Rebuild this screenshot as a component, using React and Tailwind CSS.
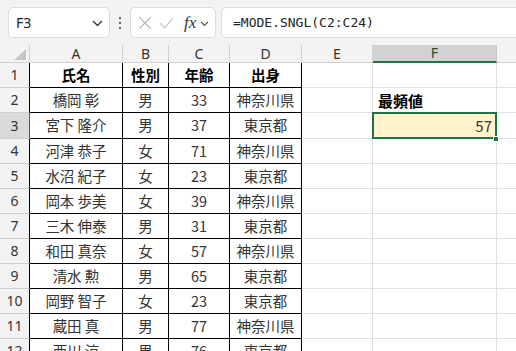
import React from "react";

const rows = [
  ["氏名", "性別", "年齢", "出身"],
  ["橋岡 彰", "男", "33", "神奈川県"],
  ["宮下 隆介", "男", "37", "東京都"],
  ["河津 恭子", "女", "71", "神奈川県"],
  ["水沼 紀子", "女", "23", "東京都"],
  ["岡本 歩美", "女", "39", "神奈川県"],
  ["三木 伸泰", "男", "31", "東京都"],
  ["和田 真奈", "女", "57", "神奈川県"],
  ["清水 勲", "男", "65", "東京都"],
  ["岡野 智子", "女", "23", "東京都"],
  ["蔵田 真", "男", "77", "神奈川県"],
  ["西川 涼", "男", "76", "東京都"],
];

const jp = { fontFamily: '"Noto Sans CJK JP", "Noto Sans", sans-serif' };
const ui = { fontFamily: '"Noto Sans", "Open Sans", sans-serif' };

function TopBar() {
  return (
    <div className="flex h-[45px] bg-[#f3f3f3] overflow-hidden">
      <div className="ml-[8px] mt-[7px] h-[31px] w-[102px] shrink-0 rounded-[5px] border border-[#dcdcdc] bg-white flex items-center pl-[7px] pr-[6px]">
        <span className="text-[14px] text-[#222] flex-1" style={ui}>F3</span>
        <svg width="11" height="7" viewBox="0 0 11 7" className="mt-[1px]">
          <path d="M1 1 L5.5 5.5 L10 1" fill="none" stroke="#333" strokeWidth="1.3" />
        </svg>
      </div>
      <div className="w-[20px] shrink-0 flex flex-col items-center justify-center gap-[3px] mt-[1px]">
        <div className="w-[2px] h-[2px] bg-[#333] rounded-full" />
        <div className="w-[2px] h-[2px] bg-[#333] rounded-full" />
        <div className="w-[2px] h-[2px] bg-[#333] rounded-full" />
      </div>
      <div className="mt-[7px] h-[31px] w-[86px] shrink-0 rounded-[5px] border border-[#dcdcdc] bg-white flex items-center pl-[6px]">
        <svg width="14" height="14" viewBox="0 0 14 14" className="ml-[1px]">
          <path d="M1 1 L13 13 M13 1 L1 13" stroke="#b8b8b8" strokeWidth="1.1" fill="none" />
        </svg>
        <svg width="15" height="12" viewBox="0 0 15 12" className="ml-[7px]">
          <path d="M1 6 L5.5 11 L14 1" stroke="#b8b8b8" strokeWidth="1.1" fill="none" />
        </svg>
        <span className="ml-[10px] text-[17px] italic text-[#333] leading-none" style={{ fontFamily: '"Liberation Serif", serif' }}>
          fx
        </span>
        <svg width="9" height="6" viewBox="0 0 9 6" className="ml-[4px] mt-[2px]">
          <path d="M1 1 L4.5 4.5 L8 1" fill="none" stroke="#555" strokeWidth="1.1" />
        </svg>
      </div>
      <div className="ml-[5px] mt-[7px] h-[31px] w-[320px] shrink-0 rounded-[5px] border border-[#dcdcdc] bg-white flex items-center pl-[11px]">
        <span className="text-[13px] text-[#222]" style={{ fontFamily: '"DejaVu Sans Mono", monospace' }}>
          =MODE.SNGL(C2:C24)
        </span>
      </div>
    </div>
  );
}

const colLetters = ["A", "B", "C", "D", "E", "F", "G"];

export default function App() {
  return (
    <div className="w-[516px] h-[351px] overflow-hidden bg-white">
      <TopBar />
      <div className="grid grid-cols-[30px_93px_46px_61px_72px_71px_124px_72px] w-[569px]">
        {/* header row */}
        <div className="h-[18px] bg-[#f3f3f3] border-r border-b border-[#d0d0d0] flex items-end justify-end pr-[3px] pb-[2px]">
          <svg width="12" height="11" viewBox="0 0 12 11">
            <path d="M12 0 L12 11 L0 11 Z" fill="#c6c6c6" />
          </svg>
        </div>
        {colLetters.map((c) =>
          c === "F" ? (
            <div
              key={c}
              className="h-[18px] bg-[#d3d3d3] border-r border-[#c8c8c8] border-b-2 border-b-[#217346] flex items-center justify-center text-[14px] text-[#1d4f30] leading-none"
              style={ui}
            >
              {c}
            </div>
          ) : (
            <div
              key={c}
              className="h-[18px] bg-[#f3f3f3] border-r border-b border-[#d0d0d0] flex items-center justify-center text-[14px] text-[#333] leading-none"
              style={ui}
            >
              {c}
            </div>
          )
        )}
        {rows.map((r, i) => {
          const n = i + 1;
          const h = n === 3 ? "h-[26px]" : "h-[25px]";
          const sel = n === 3;
          return (
            <React.Fragment key={n}>
              <div
                className={`${h} ${sel ? "bg-[#dadada] border-r-[#217346]" : "bg-[#f3f3f3] border-r-black"} border-r border-b border-b-[#d0d0d0] flex items-center justify-center text-[14px] text-[#333] leading-none`}
                style={ui}
              >
                {n}
              </div>
              {r.map((v, j) => (
                <div
                  key={j}
                  className={`${h} border-r border-b border-black flex items-center justify-center text-[14.5px] leading-none ${
                    n === 1 ? "font-bold text-black" : "text-[#333]"
                  }`}
                  style={jp}
                >
                  {v}
                </div>
              ))}
              <div className={`${h} border-r border-b border-[#e1e1e1]`} />
              {n === 2 ? (
                <div className={`${h} border-r border-b border-[#e1e1e1] flex items-center pl-[5px] text-[15px] font-bold text-black leading-none`} style={jp}>
                  最頻値
                </div>
              ) : n === 3 ? (
                <div className={`${h} relative border-r border-b border-[#e1e1e1] bg-[#fff2cc] flex items-center justify-end pr-[4px] text-[15px] text-[#333] leading-none`} style={jp}>
                  57
                  <div className="absolute left-[-1px] top-[-1px] right-[-1px] bottom-[-1px] border-2 border-[#217346]" />
                  <div className="absolute right-[-3px] bottom-[-4px] w-[6px] h-[6px] bg-[#217346] border border-white" />
                </div>
              ) : (
                <div className={`${h} border-r border-b border-[#e1e1e1]`} />
              )}
              <div className={`${h} border-r border-b border-[#e1e1e1]`} />
            </React.Fragment>
          );
        })}
      </div>
    </div>
  );
}
